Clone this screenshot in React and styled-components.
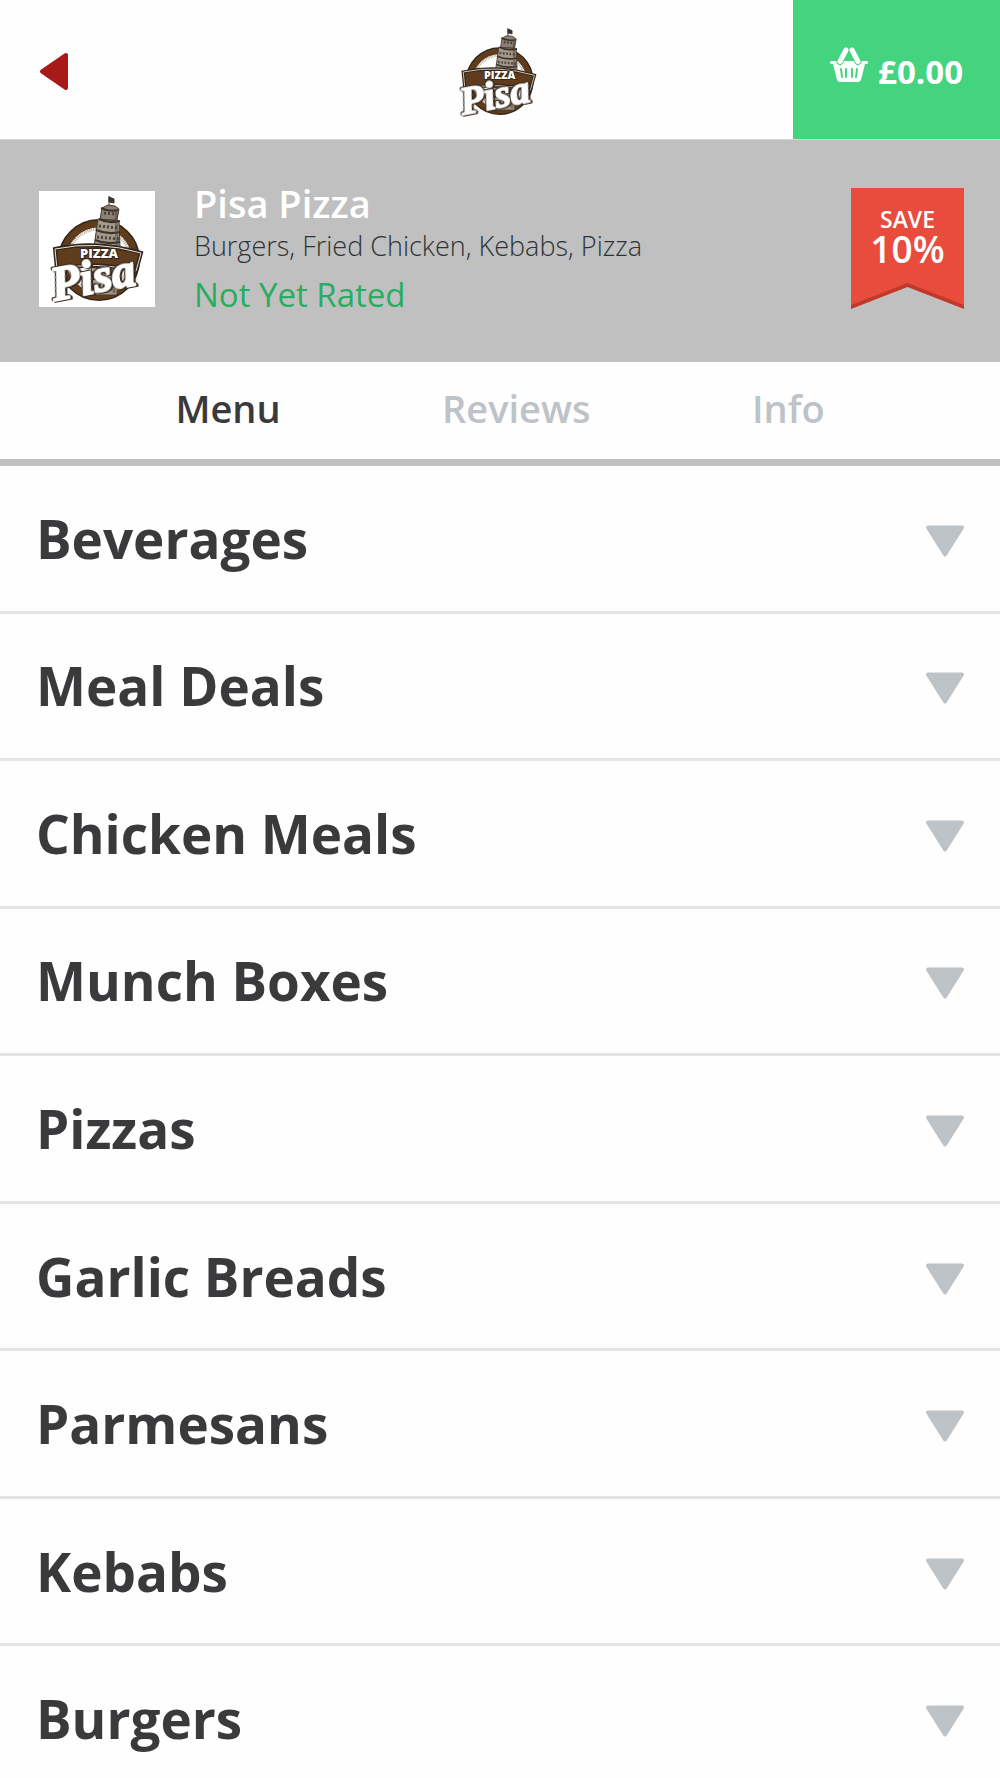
import React, { useState } from 'react';
import styled, { createGlobalStyle } from 'styled-components';

const GlobalStyle = createGlobalStyle`
  * {
    box-sizing: border-box;
  }

  body {
    margin: 0;
    background: #fefefe;
    color: #3a3a3c;
    font-family: "Open Sans", "Noto Sans", sans-serif;
  }

  button {
    padding: 0;
    border: 0;
    background: transparent;
    color: inherit;
    font: inherit;
    cursor: pointer;
  }

  svg {
    display: block;
    overflow: visible;
  }
`;

const Header = styled.header`
  display: grid;
  grid-template-columns: 1fr auto 1fr;
  height: 140px;
  border-bottom: 1px solid #d8d8d8;
`;

const BackButton = styled.button`
  justify-self: start;
  padding: 4px 40px 0;
`;

const HeaderLogo = styled.div`
  align-self: center;
  padding: 4px 4px 0 0;
`;

const BasketButton = styled.button`
  && {
    display: flex;
    justify-self: end;
    align-items: center;
    gap: 10px;
    padding: 4px 37px 0;
    background: #44d37f;
    color: #ffffff;
    font-size: 33px;
    font-weight: 700;
  }

  svg {
    margin-bottom: 12px;
  }
`;

const Banner = styled.section`
  display: flex;
  align-items: flex-start;
  gap: 39px;
  height: 222px;
  padding: 48px 36px 0 39px;
  background: #c0c0c0;
`;

const LogoTile = styled.div`
  margin-top: 3px;
  background: #ffffff;
`;

const Details = styled.div`
  flex: 1;
`;

const Name = styled.h1`
  margin: -9px 0 0;
  color: #ffffff;
  font-size: 38px;
  font-weight: 600;
  line-height: 48px;
`;

const Cuisines = styled.p`
  margin: 0;
  color: #2d3436;
  font-size: 27px;
  font-weight: 300;
  line-height: 38px;
`;

const Rating = styled.p`
  margin: 0;
  color: #27ae60;
  font-size: 33px;
  line-height: 60px;
`;

const Ribbon = styled.div`
  display: grid;

  > * {
    grid-area: 1 / 1;
  }
`;

const RibbonText = styled.div`
  padding-top: 18px;
  color: #ffffff;
  font-size: 37px;
  font-weight: 600;
  line-height: 34px;
  text-align: center;

  small {
    display: block;
    font-size: 23px;
    line-height: 26px;
  }
`;

const Tabs = styled.nav`
  display: flex;
  justify-content: space-evenly;
  height: 104px;
  padding: 0 14px;
  border-bottom: 7px solid #c0c0c0;
`;

const Tab = styled.button`
  && {
    padding-bottom: 6px;
    color: ${props => (props.$active ? '#3a3a3c' : '#bdc3c7')};
    font-size: 38px;
    font-weight: 600;
  }
`;

const CategoryList = styled.main`
  display: grid;
  grid-auto-rows: 1fr;
  min-height: 1328px;
`;

const Category = styled.button`
  && {
    display: flex;
    align-items: center;
    justify-content: space-between;
    width: 100%;
    padding: 0 36px;
    border-bottom: 3px solid #e4e4e4;
    font-size: 53px;
    font-weight: 700;
  }

  svg {
    margin-top: 5px;
  }
`;

const LogoScript = styled.text`
  font-family: "Liberation Serif", serif;
  font-size: 48px;
  font-style: italic;
  font-weight: 700;
  fill: #ffffff;
  stroke: #ffffff;
  stroke-width: 2px;
  stroke-linejoin: round;
  filter: drop-shadow(1px 1px #33251a) drop-shadow(-1px -1px #33251a) drop-shadow(1px 0 #33251a);
`;

const categories = [
  'Beverages',
  'Meal Deals',
  'Chicken Meals',
  'Munch Boxes',
  'Pizzas',
  'Garlic Breads',
  'Parmesans',
  'Kebabs',
  'Burgers',
];

const PisaLogo = ({ size }) => (
  <svg width={size} height={size} viewBox="0 0 116 116" role="img" aria-label="Pizza Pisa">
    <circle cx="60" cy="69" r="37" fill="#fff" stroke="#33251a" strokeWidth="8" />
    <circle cx="60" cy="69" r="36" fill="none" stroke="#5f3d1c" strokeWidth="7" />
    <circle cx="60" cy="69" r="31" fill="none" stroke="#b5aa9b" strokeWidth="3" strokeDasharray="1 1" />
    {/* tower */}
    <path d="M70 15V5M70 6l5 2v4l-5-1z" fill="#3b332b" stroke="#3b332b" strokeWidth="1" />
    <path d="M63 17l6-3 7 1 4 3-2 11H61z" fill="#8b8073" stroke="#40382f" strokeWidth="1" />
    <path d="M59 28l21 2 1 26-3 48H49l6-48z" fill="#a3988a" stroke="#40382f" strokeWidth="1" />
    <path d="M62 17q8 4 17 2M60 28q10 5 21 2M57 39q12 5 24 2M56 49q12 5 25 2M53 76h25M52 88h25" stroke="#3b332b" strokeWidth="2" fill="none" />
    <path d="M65 22l12 1M60 35l20 2M58 46l22 2M56 55l24 2M53 82h24M52 94h24" stroke="#4a4138" strokeWidth="3" strokeDasharray="2 2" />
    <path d="M77 20l1 34-3 48" stroke="#4a4138" strokeWidth="3" fill="none" opacity="0.5" />
    {/* banner */}
    <path d="M16 58Q58 49 102 62L97 80Q58 70 18 78z" fill="#5f3d1c" stroke="#33251a" strokeWidth="4" />
    <path d="M16 58Q58 49 102 62L97 80Q58 70 18 78z" fill="none" stroke="#e9e3da" strokeWidth="1" />
    <text
      x="60"
      y="67"
      textAnchor="middle"
      fontFamily="Open Sans, sans-serif"
      fontSize="13"
      fontWeight="800"
      fill="#fff"
      stroke="#33251a"
      strokeWidth="2"
      paintOrder="stroke"
    >
      PIZZA
    </text>
    <LogoScript x="15" y="110" transform="rotate(-11 15 110)">Pisa</LogoScript>
  </svg>
);

const BasketIcon = () => (
  <svg width="38" height="35" viewBox="0 0 38 35" fill="none" aria-hidden="true">
    <path
      d="M1 13h6q1 4 4 3.500 2-.5 3-3.500h10q1 3 3 3.500 3 .5 4-3.500h6q1 0 1 1.500T37 16h-2l-4 16q-1 2-3 2H10q-2 0-3-2L3 16H1q-1 0-1-1.500T1 13z"
      fill="#fff"
    />
    <path d="M10 13.500L16 2M28 13.500L22 2" stroke="#44d37f" strokeWidth="7" strokeLinecap="round" />
    <path d="M10 13.500L16 2M28 13.500L22 2" stroke="#fff" strokeWidth="5" strokeLinecap="round" />
    <path d="M11 21l1 8M16 21v8M22 21v8M27 21l-1 8" stroke="#44d37f" strokeWidth="2" strokeLinecap="round" />
  </svg>
);

const BackIcon = () => (
  <svg width="29" height="37" viewBox="0 0 29 37" aria-hidden="true">
    <path d="M2 18.500L26 2v33z" fill="#a71a18" stroke="#a71a18" strokeWidth="4" strokeLinejoin="round" />
  </svg>
);

const DownIcon = () => (
  <svg width="38" height="32" viewBox="0 0 38 32" aria-hidden="true">
    <path d="M2 2.500h34L19 29.500z" fill="#bdc3c7" stroke="#bdc3c7" strokeWidth="4" strokeLinejoin="round" />
  </svg>
);

const App = () => {
  const [activeTab, setActiveTab] = useState('Menu');

  return (
    <>
      <GlobalStyle />
      <Header>
        <BackButton aria-label="Back">
          <BackIcon />
        </BackButton>
        <HeaderLogo>
          <PisaLogo size={96} />
        </HeaderLogo>
        <BasketButton>
          <BasketIcon />
          £0.00
        </BasketButton>
      </Header>
      <Banner>
        <LogoTile>
          <PisaLogo size={116} />
        </LogoTile>
        <Details>
          <Name>Pisa Pizza</Name>
          <Cuisines>Burgers, Fried Chicken, Kebabs, Pizza</Cuisines>
          <Rating>Not Yet Rated</Rating>
        </Details>
        <Ribbon>
          <svg width="113" height="121" viewBox="0 0 113 121" aria-hidden="true">
            <path d="M0 0h113v121L56.500 99 0 121z" fill="#c0392b" />
            <path d="M0 0h113v117L56.500 95 0 117z" fill="#e84c3d" />
          </svg>
          <RibbonText>
            <small>SAVE</small>
            10%
          </RibbonText>
        </Ribbon>
      </Banner>
      <Tabs>
        {['Menu', 'Reviews', 'Info'].map((tab) => (
          <Tab key={tab} $active={tab === activeTab} onClick={() => setActiveTab(tab)}>
            {tab}
          </Tab>
        ))}
      </Tabs>
      <CategoryList>
        {categories.map((category) => (
          <Category key={category}>
            {category}
            <DownIcon />
          </Category>
        ))}
      </CategoryList>
    </>
  );
};

export default App;
